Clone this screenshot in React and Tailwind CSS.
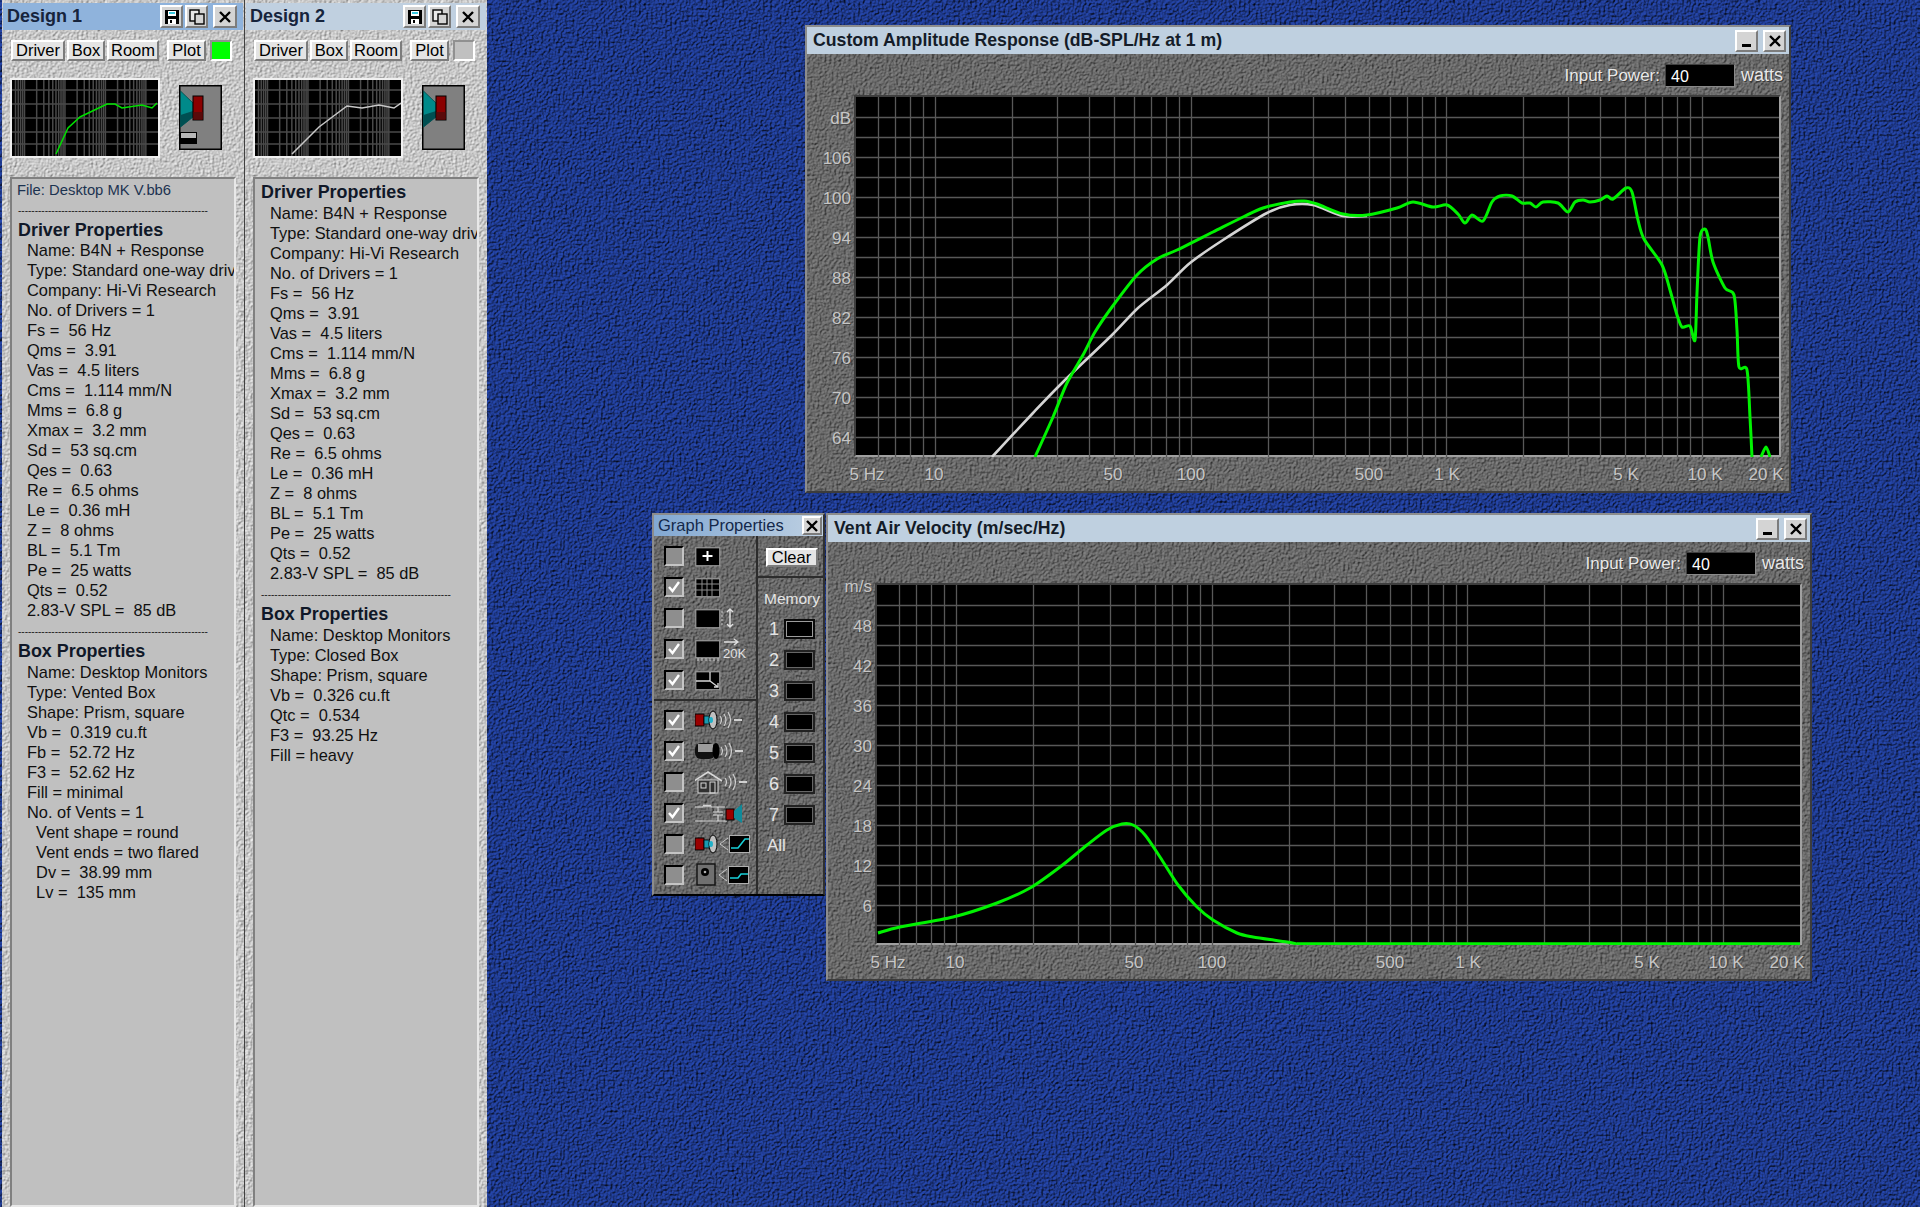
import React from "react";

const Filters = () => (
  <svg className="absolute w-0 h-0" aria-hidden="true">
    <defs>
      <filter id="tex-dark" x="0" y="0" width="100%" height="100%" colorInterpolationFilters="sRGB">
        <feTurbulence type="fractalNoise" baseFrequency="0.42" numOctaves="2" seed="4" />
        <feDiffuseLighting surfaceScale="1.5" diffuseConstant="1" lightingColor="#828282">
          <feDistantLight azimuth="225" elevation="55" />
        </feDiffuseLighting>
      </filter>
      <filter id="tex-light" x="0" y="0" width="100%" height="100%" colorInterpolationFilters="sRGB">
        <feTurbulence type="fractalNoise" baseFrequency="0.42" numOctaves="2" seed="9" />
        <feDiffuseLighting surfaceScale="0.9" diffuseConstant="1" lightingColor="#f4f4f4">
          <feDistantLight azimuth="225" elevation="55" />
        </feDiffuseLighting>
      </filter>
      <filter id="tex-blue" x="0" y="0" width="100%" height="100%" colorInterpolationFilters="sRGB">
        <feTurbulence type="fractalNoise" baseFrequency="0.42" numOctaves="2" seed="2" />
        <feDiffuseLighting surfaceScale="2.4" diffuseConstant="1" lightingColor="#2648b0">
          <feDistantLight azimuth="225" elevation="55" />
        </feDiffuseLighting>
      </filter>
    </defs>
  </svg>
);

const Tex = ({ id }) => (
  <svg className="absolute inset-0 w-full h-full" aria-hidden="true">
    <rect x="0" y="0" width="100%" height="100%" filter={`url(#${id})`} />
  </svg>
);

const pts = (a, dx = 0, dy = 0) => a.map(([x, y]) => `${x - dx},${y - dy}`).join(" ");

const smooth = (a, dx = 0, dy = 0, k = 0.14) => {
  const p = a.map(([x, y]) => [x - dx, y - dy]);
  let d = `M${p[0][0]} ${p[0][1]}`;
  for (let i = 0; i < p.length - 1; i++) {
    const p0 = p[Math.max(0, i - 1)];
    const p1 = p[i];
    const p2 = p[i + 1];
    const p3 = p[Math.min(p.length - 1, i + 2)];
    d += ` C${p1[0] + (p2[0] - p0[0]) * k} ${p1[1] + (p2[1] - p0[1]) * k} ${p2[0] - (p3[0] - p1[0]) * k} ${p2[1] - (p3[1] - p1[1]) * k} ${p2[0]} ${p2[1]}`;
  }
  return d;
};

/* ---------- chart data ---------- */
const FREQS = [6, 7, 8, 9, 10, 20, 30, 40, 50, 60, 70, 80, 90, 100, 200, 300, 400, 500, 600, 700, 800, 900, 1000, 2000, 3000, 4000, 5000, 6000, 7000, 8000, 9000, 10000];
const fx = (f) => 935 + 255.7 * Math.log10(f / 10);

const GREEN = [[1035,457],[1053,417],[1067,383],[1083,355],[1095,332],[1112,307],[1137,275],[1157,259],[1177,250],[1213,232],[1243,217],[1263,208],[1290,202],[1304,201],[1317,204],[1343,214],[1367,215],[1397,208],[1413,202],[1433,207],[1447,205],[1458,214],[1465,223],[1472,215],[1483,221],[1492,202],[1500,196],[1512,196],[1522,203],[1530,203],[1536,207],[1543,202],[1558,203],[1568,212],[1575,202],[1583,200],[1590,202],[1600,200],[1607,196],[1613,199],[1626,188],[1632,192],[1638,220],[1644,239],[1662,265],[1670,290],[1677,315],[1682,327],[1690,326],[1695,340],[1697,293],[1700,237],[1705,229],[1708,237],[1713,262],[1725,288],[1734,295],[1737,330],[1739,367],[1747,370],[1750,417],[1752,457]];
const GREEN2 = [[1761,457],[1766,447],[1770,457]];
const WHITE = [[992,457],[1033,413],[1063,382],[1112,335],[1138,308],[1167,285],[1190,263],[1223,240],[1267,213],[1290,205],[1313,205],[1343,216],[1367,216]];
const VENT = [[878,933],[900,927],[953,917],[997,903],[1030,888],[1060,867],[1087,845],[1107,830],[1122,824],[1133,825],[1145,835],[1160,857],[1178,885],[1197,907],[1213,920],[1237,933],[1253,937],[1287,942],[1297,944]];

const GridLines = () => (
  <g stroke="#585858" strokeWidth="1.3">
    {FREQS.map((f) => {
      const x = Math.round(fx(f)) + 0.5;
      return <line key={f} x1={x} x2={x} y1="97" y2="457" />;
    })}
    {Array.from({ length: 17 }, (_, i) => 117.5 + i * 20).map((y) => (
      <line key={y} x1="856" x2="1779" y1={y} y2={y} />
    ))}
  </g>
);

const AmpChart = () => (
  <svg viewBox="856 97 923 360" className="block w-[923px] h-[360px]">
    <GridLines />
    <path d={smooth(WHITE)} fill="none" stroke="#d4d4d4" strokeWidth="2.6" />
    <path d={smooth(GREEN)} fill="none" stroke="#00f200" strokeWidth="3" strokeLinejoin="round" />
    <path d={smooth(GREEN2)} fill="none" stroke="#00f200" strokeWidth="3" strokeLinejoin="round" />
  </svg>
);

const VentChart = () => (
  <svg viewBox="856 97 923 360" className="block w-[923px] h-[360px]">
    <GridLines />
    <path d={smooth(VENT, 21, 488)} fill="none" stroke="#00f200" strokeWidth="3" strokeLinejoin="round" />
    <line x1="1276" x2="1779" y1="456" y2="456" stroke="#00f200" strokeWidth="3.4" />
  </svg>
);

/* ---------- small controls ---------- */
const raised = "border-2 border-t-white border-l-white border-b-[#7c7c7c] border-r-[#7c7c7c]";

const IconBtn = ({ children, className = "" }) => (
  <div className={`flex items-center justify-center bg-[#d4d4d4] ${raised} ${className}`}>{children}</div>
);

const XIcon = () => (
  <svg viewBox="0 0 14 14" className="w-[14px] h-[14px]">
    <path d="M2 2 L12 12 M12 2 L2 12" stroke="#000" strokeWidth="2.4" fill="none" />
  </svg>
);
const MinIcon = () => (
  <svg viewBox="0 0 14 14" className="w-[14px] h-[14px]">
    <rect x="2" y="10" width="9" height="3" fill="#000" />
  </svg>
);
const SaveIcon = () => (
  <svg viewBox="0 0 16 16" className="w-[16px] h-[16px]">
    <path d="M1 1 H15 V15 H1 Z" fill="#000" />
    <rect x="4" y="2" width="8" height="5" fill="#fff" />
    <rect x="5" y="3" width="6" height="2" fill="#38c8e0" />
    <rect x="4" y="10" width="8" height="5" fill="#fff" />
    <rect x="6" y="11" width="2" height="3" fill="#000" />
  </svg>
);
const CopyIcon = () => (
  <svg viewBox="0 0 16 16" className="w-[16px] h-[16px]" fill="none" stroke="#000" strokeWidth="1.4">
    <rect x="1" y="1" width="9" height="11" fill="#e8e8e8" />
    <rect x="6" y="5" width="9" height="10" fill="#d4d4d4" />
  </svg>
);

const Btn = ({ children, className = "" }) => (
  <div className={`flex items-center justify-center bg-[#e4e4e4] h-[21px] text-[16.5px] leading-none text-black ${raised} ${className}`}>
    {children}
  </div>
);

/* ---------- design panels ---------- */
const miniX = (f) => ((fx(f) - 856) * 146) / 923;

const MiniGraph = ({ curve, color }) => (
  <div className="w-[150px] h-[80px] border-2 border-[#f0f0f0] bg-black">
    <svg viewBox="0 0 146 76" className="block w-[146px] h-[76px]">
      <g stroke="#4a4a4a" strokeWidth="1.5">
        {FREQS.map((f) => (
          <line key={f} x1={miniX(f)} x2={miniX(f)} y1="0" y2="76" />
        ))}
        {[10, 24, 38, 52, 64].map((y) => (
          <line key={y} x1="0" x2="146" y1={y} y2={y} />
        ))}
      </g>
      <polyline points={pts(curve)} fill="none" stroke={color} strokeWidth="1.5" />
    </svg>
  </div>
);

const SpeakerBox = ({ vent }) => (
  <svg viewBox="0 0 43 65" className="block w-[43px] h-[65px] ml-[19px] mt-[7px]">
    <rect x="0.75" y="0.75" width="41.5" height="63.5" fill="#808080" stroke="#000" strokeWidth="1.5" />
    <path d="M1.5 6 L14 18 V32 L1.5 42 Z" fill="#008a8a" stroke="#004848" strokeWidth="0.8" />
    <path d="M1.5 30 L14 26 V32 L1.5 42 Z" fill="#004f52" />
    <rect x="14" y="11" width="10" height="24" fill="#8a0000" stroke="#000" strokeWidth="1" />
    <rect x="14.5" y="27" width="9" height="7.5" fill="#5a0a0a" />
    {vent && (
      <g>
        <rect x="1" y="47" width="17" height="12" fill="#000" />
        <rect x="2" y="48" width="15" height="5" fill="#b8b8b8" />
      </g>
    )}
  </svg>
);

const DRIVER = [
  "Name: B4N + Response",
  "Type: Standard one-way driver",
  "Company: Hi-Vi Research",
  "No. of Drivers = 1",
  "Fs =  56 Hz",
  "Qms =  3.91",
  "Vas =  4.5 liters",
  "Cms =  1.114 mm/N",
  "Mms =  6.8 g",
  "Xmax =  3.2 mm",
  "Sd =  53 sq.cm",
  "Qes =  0.63",
  "Re =  6.5 ohms",
  "Le =  0.36 mH",
  "Z =  8 ohms",
  "BL =  5.1 Tm",
  "Pe =  25 watts",
  "Qts =  0.52",
  "2.83-V SPL =  85 dB",
];

const BOX1 = [
  "Name: Desktop Monitors",
  "Type: Vented Box",
  "Shape: Prism, square",
  "Vb =  0.319 cu.ft",
  "Fb =  52.72 Hz",
  "F3 =  52.62 Hz",
  "Fill = minimal",
  "No. of Vents = 1",
  "  Vent shape = round",
  "  Vent ends = two flared",
  "  Dv =  38.99 mm",
  "  Lv =  135 mm",
];

const BOX2 = [
  "Name: Desktop Monitors",
  "Type: Closed Box",
  "Shape: Prism, square",
  "Vb =  0.326 cu.ft",
  "Qtc =  0.534",
  "F3 =  93.25 Hz",
  "Fill = heavy",
];

const Line = ({ children }) => <div className="h-5 leading-5 pl-[15px] whitespace-pre text-[16.4px] text-[#101010]">{children}</div>;
const Head = ({ children, className = "" }) => (
  <div className={`h-5 leading-5 pl-[6px] whitespace-pre text-[17.9px] font-bold text-[#101828] ${className}`}>{children}</div>
);
const Dash = ({ className = "mt-[1px]" }) => (
  <div className={`h-5 leading-5 pl-[6px] -mb-[1px] whitespace-pre text-[10px] text-[#202020] ${className}`}>
    ---------------------------------------------------------
  </div>
);

const DesignPanel = ({ title, active, swatch, curve, color, vent, file, box, wClass }) => (
  <div className={`relative shrink-0 h-full ${wClass}`}>
    <Tex id="tex-light" />
    <div className="relative flex flex-col h-full">
      <div className={`mt-[3px] ml-[1px] mr-[1px] h-[27px] flex items-center pl-[2px] pr-[6px] ${active ? "bg-[#8fb3dc]" : "bg-[#c0d0e0]"}`}>
        <span className="font-bold text-[18px] pl-[2px] text-[#16243c]">{title}</span>
        <div className="ml-auto flex items-center">
          <IconBtn className="w-[23px] h-[23px]"><SaveIcon /></IconBtn>
          <IconBtn className="w-[23px] h-[23px] ml-[2px]"><CopyIcon /></IconBtn>
          <IconBtn className="w-[24px] h-[23px] ml-[5px]"><XIcon /></IconBtn>
        </div>
      </div>
      <div className="mt-[10px] ml-[9px] flex items-center h-[21px]">
        <Btn className="w-[54px]">Driver</Btn>
        <Btn className="w-[38px] ml-[2px]">Box</Btn>
        <Btn className="w-[52px] ml-[2px]">Room</Btn>
        <Btn className="w-[39px] ml-[8px]">Plot</Btn>
        <div className={`w-[22px] h-[21px] ml-[4px] border-2 border-t-[#909090] border-l-[#909090] border-b-white border-r-white ${swatch}`} />
      </div>
      <div className="mt-[17px] ml-[8px] h-[80px] flex items-start">
        <MiniGraph curve={curve} color={color} />
        <SpeakerBox vent={vent} />
      </div>
      <div className="mt-[19px] ml-[8px] w-[226px] flex-1 min-h-0 overflow-hidden bg-[#c0c0c0] border-2 border-t-[#808080] border-l-[#808080] border-r-[#e8e8e8] border-b-[#e8e8e8]">
        <div className={file ? "pt-[1px]" : "pt-[3px]"}>
          {file && (
            <>
              <div className="h-5 leading-5 pl-[5px] whitespace-pre text-[14.8px] text-[#1c3350]">{file}</div>
              <Dash />
            </>
          )}
          <Head className={file ? "" : "mb-[1px]"}>Driver Properties</Head>
          {DRIVER.map((t) => <Line key={t}>{t}</Line>)}
          <Dash className="mt-[2px]" />
          <Head className="mb-[1px]">Box Properties</Head>
          {box.map((t) => <Line key={t}>{t}</Line>)}
        </div>
      </div>
    </div>
  </div>
);

/* ---------- graph windows ---------- */
const labelCls = "text-[17px] leading-none text-[#c6c6c6] [text-shadow:1px_1px_0_#484848]";

const GraphWindow = ({ title, pos, yLabels, yClass, Chart }) => (
  <div className={`absolute ${pos} w-[986px] h-[468px] border-2 border-t-[#8c8c8c] border-l-[#8c8c8c] border-r-[#3c3c3c] border-b-[#3c3c3c] flex flex-col`}>
    <div className="h-[27px] shrink-0 bg-[#bfd0e0] flex items-center pl-[6px] pr-[3px]">
      <span className="font-bold text-[17.7px] text-[#141c28]">{title}</span>
      <IconBtn className="ml-auto w-[23px] h-[22px]"><MinIcon /></IconBtn>
      <IconBtn className="ml-[5px] w-[23px] h-[22px]"><XIcon /></IconBtn>
    </div>
    <div className="relative flex-1 min-h-0">
      <Tex id="tex-dark" />
      <div className="relative flex flex-col h-full">
        <div className="h-[41px] flex items-start justify-end pr-[6px] pt-[10px]">
          <span className="text-[17px] leading-[23px] text-[#e8e8e8] [text-shadow:1px_1px_0_#383838]">Input Power:</span>
          <div className="ml-[5px] w-[70px] h-[23px] bg-black border border-[#8a8a8a] border-t-[#404040] border-l-[#404040] pl-[5px] text-[16px] leading-[23px] text-white">40</div>
          <span className="ml-[6px] text-[18px] leading-[23px] text-[#e8e8e8] [text-shadow:1px_1px_0_#383838]">watts</span>
        </div>
        <div className="flex h-[364px]">
          <div className={`w-[47px] flex flex-col items-end pr-[3px] ${yClass}`}>
            {yLabels.map((l) => (
              <div key={l} className={`h-10 shrink-0 flex items-center ${labelCls}`}>{l}</div>
            ))}
          </div>
          <div className="h-[362px] w-[927px] border-2 border-t-[#3e3e3e] border-l-[#3e3e3e] border-r-[#a0a0a0] border-b-[#a0a0a0] bg-black">
            <Chart />
          </div>
        </div>
        <div className="flex pt-[7px]">
          {[["5 Hz","ml-[30px]"],["10","ml-[7px]"],["50","ml-[119px]"],["100","ml-[18px]"],["500","ml-[118px]"],["1 K","ml-[18px]"],["5 K","ml-[119px]"],["10 K","ml-[19px]"],["20 K","ml-[1px]"]].map(([t, m]) => (
            <div key={t} className={`w-[60px] shrink-0 text-center whitespace-nowrap ${m} ${labelCls}`}>{t}</div>
          ))}
        </div>
      </div>
    </div>
  </div>
);

/* ---------- graph properties ---------- */
const Check = ({ on }) => (
  <div className="w-[20px] h-[20px] bg-[#8e8e8e] border-2 border-t-black border-l-black border-r-[#c4c4c4] border-b-[#c4c4c4] flex items-center justify-center">
    {on && (
      <svg viewBox="0 0 14 14" className="w-[14px] h-[14px]">
        <path d="M2 7 L5.5 11 L12 2" fill="none" stroke="#fff" strokeWidth="2.4" />
      </svg>
    )}
  </div>
);

const Ico = ({ children }) => (
  <svg viewBox="0 0 56 24" className="block w-[56px] h-[24px]">{children}</svg>
);

const Frame = ({ y = 3, h = 18 }) => (
  <rect x="0.75" y={y + 0.75} width="24" height={h} fill="#000" stroke="#9a9a9a" strokeWidth="1.2" />
);

const SpeakerGlyph = () => (
  <g>
    <rect x="0" y="6" width="9" height="12" fill="#9a0000" stroke="#000" />
    <path d="M9 8 L15 8 L15 16 L9 16 Z" fill="#1a9ab0" stroke="#000" strokeWidth="0.8" />
    <ellipse cx="18" cy="12" rx="4" ry="9" fill="#c0c0c0" stroke="#000" />
    <ellipse cx="16" cy="12" rx="2" ry="3" fill="#20b0c8" />
  </g>
);
const Waves = ({ x = 0 }) => (
  <g transform={`translate(${x},0)`} fill="none" stroke="#d0d0d0" strokeWidth="1.2">
    <path d="M0 8 Q3 12 0 16" />
    <path d="M4 6 Q8 12 4 18" />
    <path d="M8 4 Q13 12 8 20" />
    <rect x="14" y="11" width="8" height="2" fill="#d0d0d0" stroke="none" />
  </g>
);

const ICONS = [
  <Ico><Frame /><path d="M12.5 7 V17 M7.5 12 H17.5" stroke="#fff" strokeWidth="2" /></Ico>,
  <Ico><Frame /><path d="M7 3 V21 M12 3 V21 M17 3 V21 M1 9 H24 M1 15 H24" stroke="#8c8c8c" strokeWidth="1" /></Ico>,
  <Ico><Frame /><path d="M26 6 H28 M26 10 H28 M26 14 H28 M26 18 H28" stroke="#d0d0d0" /><path d="M35 3 V21 M32 6 L35 3 L38 6 M32 18 L35 21 L38 18" fill="none" stroke="#e0e0e0" strokeWidth="1.4" /></Ico>,
  <div className="relative w-[56px] h-[24px]">
    <Ico><Frame h={17} /><path d="M3 21 V24 M7 21 V24 M11 21 V24 M15 21 V24 M19 21 V24 M23 21 V24" stroke="#d0d0d0" /><path d="M29 5 H43 M39 2 L43 5 L39 8" fill="none" stroke="#e0e0e0" strokeWidth="1.3" /></Ico>
    <span className="absolute left-[28px] top-[9px] text-[13px] leading-[15px] text-[#e0e0e0]">20K</span>
  </div>,
  <Ico><Frame /><path d="M1 13 H15 V4 M15 13 L23 19 M19 19 H23 V15" fill="none" stroke="#d8d8d8" strokeWidth="1.3" /></Ico>,
];

const ICONS2 = [
  <Ico><SpeakerGlyph /><Waves x="25" /></Ico>,
  <Ico><rect x="0" y="4" width="20" height="16" rx="6" fill="#111" /><rect x="3" y="5" width="15" height="8" fill="#9c9c9c" /><ellipse cx="21" cy="12" rx="3.5" ry="8" fill="#000" /><Waves x="26" /></Ico>,
  <Ico><path d="M-1 11 L13 2 L27 11" fill="none" stroke="#d8d8d8" strokeWidth="1.5" /><rect x="3" y="10" width="20" height="13" fill="#303030" stroke="#d8d8d8" /><rect x="6" y="13" width="5" height="5" fill="none" stroke="#d8d8d8" /><rect x="15" y="12" width="5" height="11" fill="none" stroke="#d8d8d8" /><g transform="translate(4,0)"><Waves x="26" /></g></Ico>,
  <Ico><path d="M0 6 H8 Q9 2 10 6 Q11 2 12 6 Q13 2 14 6 Q15 2 16 6 H30 M0 20 H32 M23 6 V11 M18 11 H28 M18 14 H28 M23 14 V20" fill="none" stroke="#d8d8d8" strokeWidth="1.2" /><rect x="31" y="8" width="8" height="11" fill="#9a0000" stroke="#000" /><path d="M39 10 L47 3 V22 L39 17 Z" fill="#108a9a" /></Ico>,
  <Ico><SpeakerGlyph /><path d="M33 6 L25 12 L33 18" fill="none" stroke="#c8c8c8" strokeWidth="1" /><rect x="34.5" y="3.5" width="20" height="17" fill="#000" stroke="#b0b0b0" /><path d="M36 16 H43 L50 7 H54" fill="none" stroke="#18d0d8" strokeWidth="1.6" /></Ico>,
  <Ico><rect x="2" y="1" width="18" height="21" fill="#707070" stroke="#111" strokeWidth="1.4" /><circle cx="10" cy="9" r="4" fill="#000" /><circle cx="10" cy="9" r="1.3" fill="#b0b0b0" /><path d="M32 6 L24 12 L32 18" fill="none" stroke="#c8c8c8" strokeWidth="1" /><rect x="33.5" y="3.5" width="20" height="17" fill="#000" stroke="#b0b0b0" /><path d="M35 15 H43 L46 11 H53" fill="none" stroke="#18d0d8" strokeWidth="1.6" /></Ico>,
];

const Row = ({ on, icon }) => (
  <div className="h-[31px] flex items-center pl-[10px]">
    <Check on={on} />
    <div className="ml-[11px]">{icon}</div>
  </div>
);

const Swatch = ({ first }) => (
  <div className={`ml-[3px] w-[31px] h-[20px] bg-black border-2 ${first ? "border-[#0a0a0a]" : "border-[#222222]"} flex`}>
    <div className={`flex-1 border ${first ? "border-[#9c9c9c]" : "border-[#666666]"}`} />
  </div>
);

const GraphProps = () => (
  <div className="absolute left-[652px] top-[513px] w-[173px] h-[383px] border-2 border-t-[#8c8c8c] border-l-[#8c8c8c] border-r-[#303030] border-b-black flex flex-col">
    <div className="h-[21px] shrink-0 bg-gradient-to-r from-[#82a8d2] to-[#bed0e2] flex items-center pl-[4px] pr-[1px]">
      <span className="text-[16.5px] leading-none text-[#14284a]">Graph Properties</span>
      <IconBtn className="ml-auto w-[20px] h-[19px]"><XIcon /></IconBtn>
    </div>
    <div className="relative flex-1 min-h-0">
      <Tex id="tex-dark" />
      <div className="relative flex h-full">
        <div className="w-[104px] shrink-0 border-r-2 border-[#2c2c2c] pt-[4px]">
          {[false, true, false, true, true].map((on, i) => (
            <Row key={i} on={on} icon={ICONS[i]} />
          ))}
          <div className="h-[2px] bg-[#2c2c2c] mt-[4px] mb-[3px]" />
          {[true, true, false, true, false, false].map((on, i) => (
            <Row key={i} on={on} icon={ICONS2[i]} />
          ))}
        </div>
        <div className="flex-1">
          <div className="h-[42px] border-b-2 border-[#2c2c2c] pt-[12px] pl-[2px] flex justify-center">
            <div className={`w-[52px] h-[19px] bg-[#e4e4e4] flex items-center justify-center text-[16.5px] leading-none text-black ${raised}`}>Clear</div>
          </div>
          <div className="h-[35px] pt-[11px] pl-[6px] text-[15.5px] leading-[20px] text-[#e4e4e4] whitespace-nowrap">Memory</div>
          {[1, 2, 3, 4, 5, 6, 7].map((n) => (
            <div key={n} className="h-[31px] flex items-center">
              <span className="w-[14px] ml-[9px] text-center text-[18px] leading-none text-[#e4e4e4]">{n}</span>
              <Swatch first={n === 1} />
            </div>
          ))}
          <div className="h-[31px] flex items-center pl-[9px] text-[17px] leading-none text-[#e4e4e4]">All</div>
        </div>
      </div>
    </div>
  </div>
);

const C1 = [[44,74],[56,48],[68,37],[95,24],[103,24],[110,28],[130,25],[140,28],[145,23]];
const C2 = [[37,74],[64,47],[92,26],[107,28],[124,25],[139,28],[146,23]];

export default function App() {
  return (
    <div className="relative w-[1920px] h-[1207px] overflow-hidden font-['Liberation_Sans',sans-serif] bg-[#1c3a90]">
      <Filters />
      <Tex id="tex-blue" />
      <div className="relative flex h-full pl-[2px]">
        <DesignPanel
          title="Design 1"
          active
          swatch="bg-[#00ff00]"
          curve={C1}
          color="#00e000"
          vent
          file="File: Desktop MK V.bb6"
          box={BOX1}
          wClass="w-[243px] border-r border-[#404040]"
        />
        <DesignPanel
          title="Design 2"
          swatch="bg-[#c0c0c0]"
          curve={C2}
          color="#c8c8c8"
          box={BOX2}
          wClass="w-[242px]"
        />
      </div>
      <GraphWindow
        title="Custom Amplitude Response (dB-SPL/Hz at 1 m)"
        pos="left-[805px] top-[25px]"
        yLabels={["dB", "106", "100", "94", "88", "82", "76", "70", "64"]}
        yClass="pt-[3px]"
        Chart={AmpChart}
      />
      <GraphWindow
        title="Vent Air Velocity (m/sec/Hz)"
        pos="left-[826px] top-[513px]"
        yLabels={["m/s", "48", "42", "36", "30", "24", "18", "12", "6"]}
        yClass="-mt-[17px]"
        Chart={VentChart}
      />
      <GraphProps />
    </div>
  );
}
